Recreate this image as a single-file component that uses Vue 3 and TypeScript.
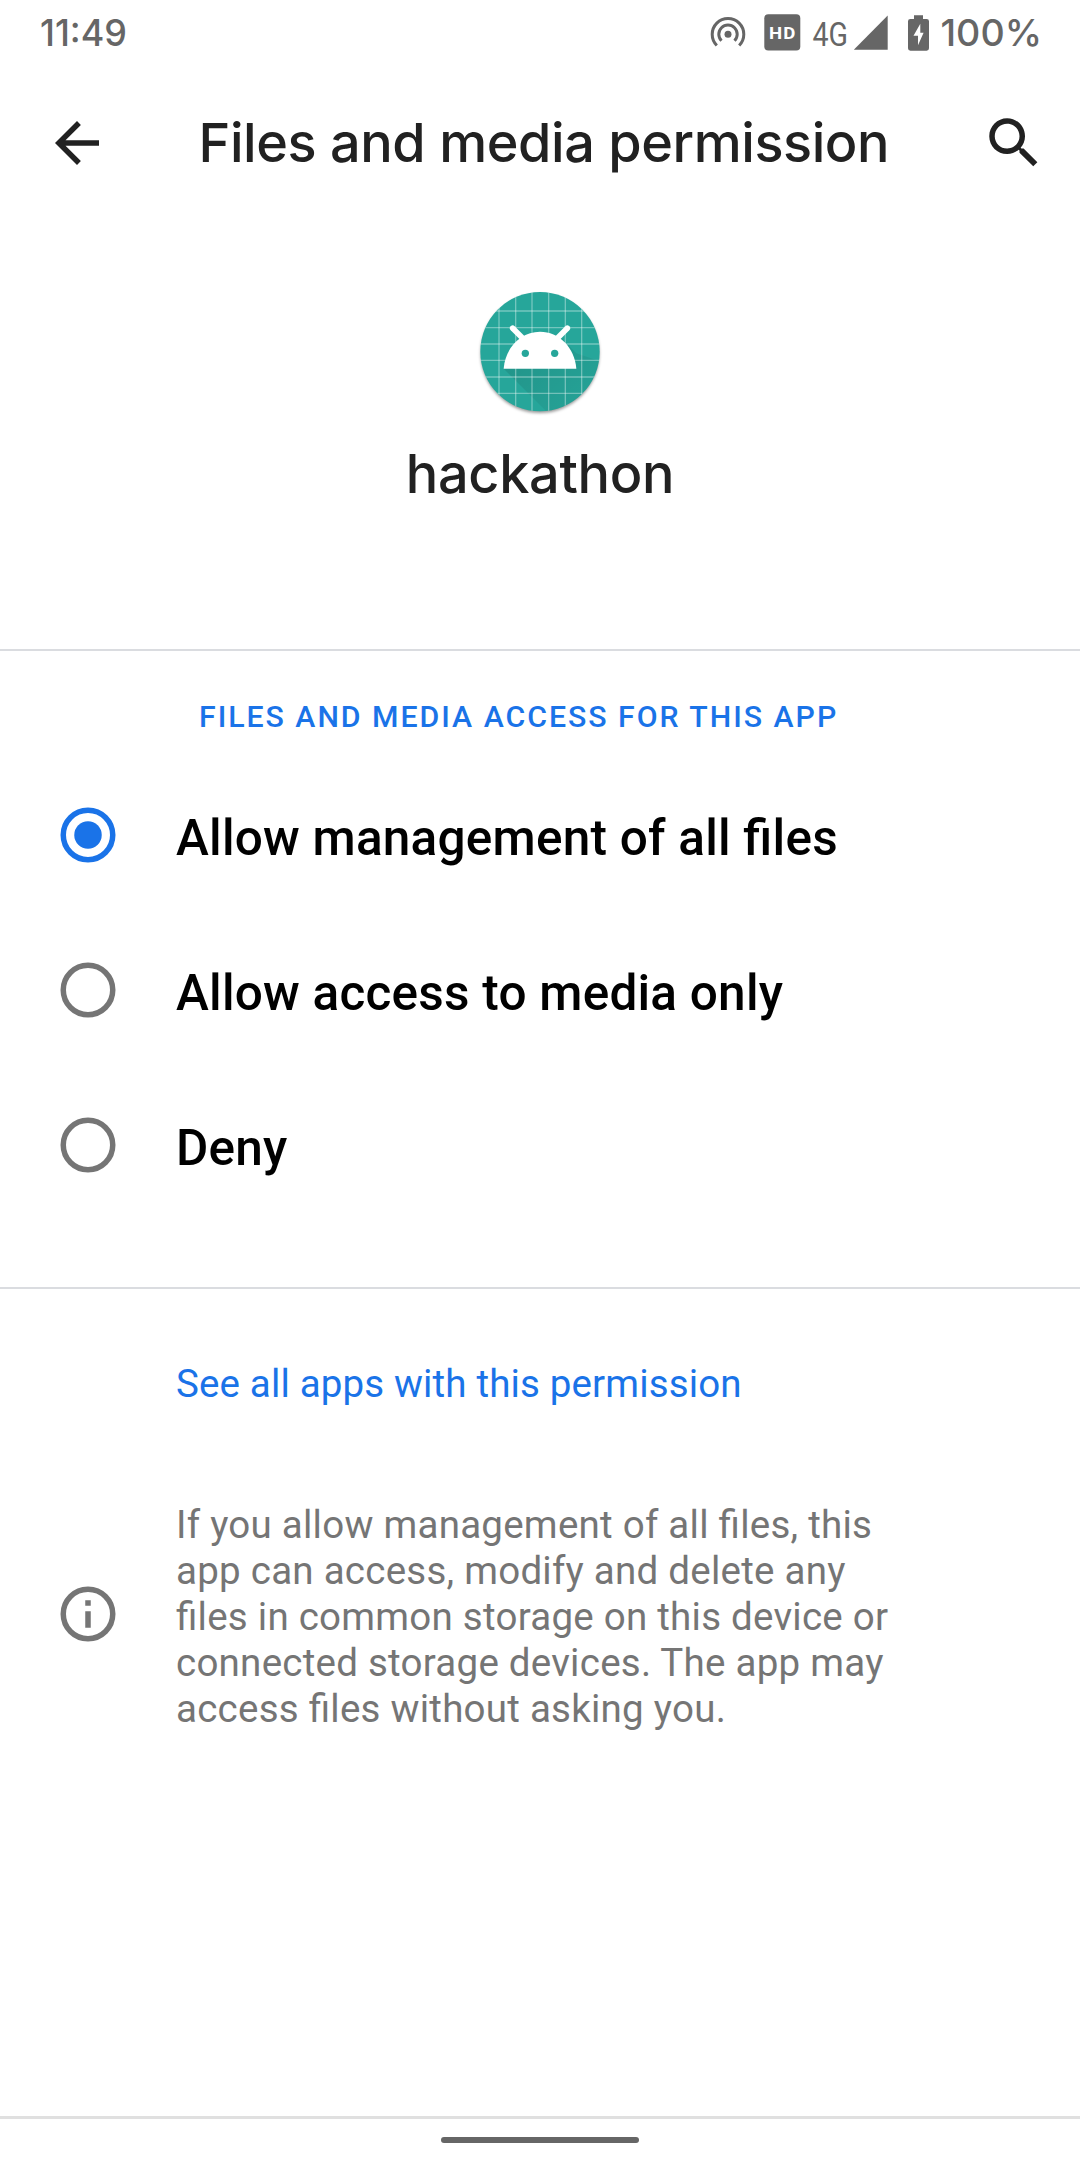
<script setup lang="ts">
import { ref } from 'vue'

interface Option {
  id: string
  label: string
}

const options: Option[] = [
  { id: 'all', label: 'Allow management of all files' },
  { id: 'media', label: 'Allow access to media only' },
  { id: 'deny', label: 'Deny' },
]

const selected = ref('all')
const gridX = [117, 167, 216, 266, 316, 365]
const gridY = [123, 173, 222, 271, 321, 370]
</script>

<template>
  <div class="screen">
    <header class="status">
      <svg class="clock" width="100" height="66" viewBox="0 0 100 66">
        <text x="0" y="46" textLength="87" lengthAdjust="spacingAndGlyphs">11:49</text>
      </svg>
      <svg class="indicators" width="340" height="66" viewBox="706 0 340 66">
        <!-- hotspot -->
        <g fill="none" stroke="#666" stroke-width="3">
          <path d="M716.8 45.5A15.8 15.8 0 1 1 739.2 45.5" />
          <path d="M721.5 40.8A9.2 9.2 0 1 1 734.5 40.8" />
        </g>
        <circle cx="728" cy="34.3" r="3.5" />
        <!-- HD calling -->
        <rect x="764.3" y="14.3" width="36" height="36.3" rx="4" />
        <text class="hd" x="769" y="39" textLength="27.5" lengthAdjust="spacingAndGlyphs">HD</text>
        <!-- mobile signal -->
        <text class="net" x="812.5" y="46.3" textLength="35.5" lengthAdjust="spacingAndGlyphs">4G</text>
        <path d="M853.8 49.7H887.7V15.6Z" />
        <!-- battery -->
        <path
          fill-rule="evenodd"
          d="M914 15.3h9v3.6h3.6a2.4 2.4 0 0 1 2.4 2.4v27a2.4 2.4 0 0 1-2.4 2.4h-16.2a2.4 2.4 0 0 1-2.4-2.4v-27a2.4 2.4 0 0 1 2.4-2.4h3.6zM920.3 23.7l-6.8 12h4.5v9.6l5.6-12.6h-3.3z"
        />
        <text x="940.5" y="46.3" textLength="101.5" lengthAdjust="spacingAndGlyphs">100%</text>
      </svg>
    </header>

    <nav class="appbar">
      <svg class="back" width="66" height="66" viewBox="0 0 24 24">
        <path d="M20 11H7.83l5.59-5.59L12 4l-8 8 8 8 1.41-1.41L7.83 13H20v-2z" />
      </svg>
      <h1 class="title">Files and media permission</h1>
      <svg width="66" height="66" viewBox="0 0 24 24">
        <path
          d="M15.5 14h-.79l-.28-.27C15.41 12.59 16 11.11 16 9.5 16 5.91 13.09 3 9.5 3S3 5.91 3 9.5 5.91 16 9.5 16c1.61 0 3.09-.59 4.23-1.57l.27.28v.79l5 4.99L20.49 19l-4.99-5zm-6 0C7.01 14 5 11.99 5 9.5S7.01 5 9.5 5 14 7.01 14 9.5 11.99 14 9.5 14z"
        />
      </svg>
    </nav>

    <section class="hero">
      <svg width="160" height="160" viewBox="0 0 480 480">
        <defs>
          <clipPath id="disc"><circle cx="240" cy="245" r="179" /></clipPath>
          <linearGradient id="cast" gradientUnits="userSpaceOnUse" x1="200" y1="240" x2="360" y2="400">
            <stop offset="0" stop-color="#000" stop-opacity="0.1" />
            <stop offset="1" stop-color="#000" stop-opacity="0.03" />
          </linearGradient>
          <filter id="soft" x="-20%" y="-20%" width="140%" height="140%">
            <feGaussianBlur stdDeviation="4" />
          </filter>
        </defs>
        <circle cx="240" cy="251" r="178" fill="#000" fill-opacity="0.4" filter="url(#soft)" />
        <g clip-path="url(#disc)">
          <rect width="480" height="480" fill="#26a69a" />
          <path d="M131 296L271 436H440V280L349 250L300 200Z" fill="url(#cast)" />
          <g stroke="#fff" stroke-opacity="0.36" stroke-width="4">
            <line v-for="x in gridX" :key="'x' + x" :x1="x" :x2="x" y1="60" y2="430" />
            <line v-for="y in gridY" :key="'y' + y" :y1="y" :y2="y" x1="55" x2="425" />
          </g>
        </g>
        <g stroke="#fff" stroke-width="17" stroke-linecap="round">
          <line x1="158" y1="175" x2="188" y2="205" />
          <line x1="322" y1="175" x2="292" y2="205" />
        </g>
        <path d="M131 296C136 232 183 185 240 185S344 232 349 296Z" fill="#fff" />
        <circle cx="196" cy="250" r="11" fill="#26a69a" />
        <circle cx="284" cy="250" r="11" fill="#26a69a" />
      </svg>
      <h2 class="name">hackathon</h2>
    </section>

    <section class="access">
      <h3 class="caption">FILES AND MEDIA ACCESS FOR THIS APP</h3>
      <div v-for="o in options" :key="o.id" class="option" @click="selected = o.id">
        <svg
          class="radio"
          :class="{ on: selected === o.id }"
          width="66"
          height="66"
          viewBox="0 0 24 24"
        >
          <circle cx="12" cy="12" r="9" fill="none" stroke="currentColor" stroke-width="2" />
          <circle v-if="selected === o.id" cx="12" cy="12" r="5" fill="currentColor" />
        </svg>
        <span class="label">{{ o.label }}</span>
      </div>
    </section>

    <section class="more">
      <a class="link">See all apps with this permission</a>
      <div class="note">
        <svg class="info" width="66" height="66" viewBox="0 0 24 24">
          <circle cx="12" cy="12" r="9" fill="none" stroke="#757575" stroke-width="2" />
          <path d="M11 7h2v2h-2zM11 11h2v6h-2z" fill="#757575" />
        </svg>
        <p class="text">
          If you allow management of all files, this app can access, modify and delete any files in
          common storage on this device or connected storage devices. The app may access files
          without asking you.
        </p>
      </div>
    </section>

    <footer class="gesture"><span class="handle"></span></footer>
  </div>
</template>

<style>
body {
  margin: 0;
  background: #fff;
}
</style>

<style scoped>
.screen {
  display: flex;
  flex-direction: column;
  width: 1080px;
  height: 2160px;
  overflow: hidden;
  background: #fff;
  color: #212121;
  font-family: Roboto, 'Liberation Sans', sans-serif;
}
svg {
  display: block;
  flex: none;
}
h1,
h2,
h3,
p {
  margin: 0;
}
.status {
  display: flex;
  justify-content: space-between;
  height: 66px;
  padding: 0 34px 0 40px;
  fill: #666;
  font: 500 37px Inter, sans-serif;
}
.status .hd {
  fill: #fff;
  font: 700 16.4px Roboto, sans-serif;
  letter-spacing: 1px;
}
.status .net {
  font: 400 34px Roboto, sans-serif;
}
.appbar {
  display: flex;
  align-items: center;
  height: 154px;
  padding: 0 33px 0 44px;
  fill: #212121;
}
.title,
.name {
  font: 500 54px/70px Inter, sans-serif;
  white-space: nowrap;
}
.title {
  flex: 1;
  margin-left: 88.5px;
  letter-spacing: -0.44px;
}
.hero {
  display: flex;
  flex-direction: column;
  align-items: center;
  box-sizing: border-box;
  height: 431px;
  padding-top: 50px;
  border-bottom: 2px solid #dadce0;
}
.name {
  margin-top: 9px;
  letter-spacing: -0.3px;
}
.access {
  box-sizing: border-box;
  height: 638px;
  padding-top: 46px;
  border-bottom: 2px solid #dadce0;
}
.caption {
  padding-left: 199px;
  margin-bottom: 21px;
  color: #1a73e8;
  font-size: 30.25px;
  font-weight: 500;
  line-height: 40px;
  letter-spacing: 1.98px;
}
.option {
  display: flex;
  align-items: flex-start;
  height: 155px;
  padding-left: 55px;
}
.radio {
  margin-top: 44px;
  color: #757575;
}
.radio.on {
  color: #1a73e8;
}
.label {
  margin: 51px 0 0 55px;
  color: #000;
  font-size: 49.5px;
  font-weight: 500;
  line-height: 58px;
  letter-spacing: 0.23px;
  font-feature-settings: 'liga' 1;
}
.more {
  flex: 1;
  padding-top: 72px;
  font-size: 38.5px;
  line-height: 46px;
  letter-spacing: 0.15px;
  font-feature-settings: 'liga' 1;
}
.link {
  display: block;
  margin-left: 176px;
  color: #1a73e8;
}
.note {
  display: flex;
  margin-top: 95px;
  padding-left: 55px;
}
.info {
  margin-top: 79px;
}
.text {
  width: 728px;
  margin-left: 55px;
  color: #757575;
  letter-spacing: 0.25px;
}
.gesture {
  display: flex;
  justify-content: center;
  box-sizing: border-box;
  height: 44px;
  padding-top: 18px;
  border-top: 3px solid #e0e0e0;
}
.handle {
  width: 198px;
  height: 6px;
  border-radius: 3px;
  background: #666;
}
</style>
